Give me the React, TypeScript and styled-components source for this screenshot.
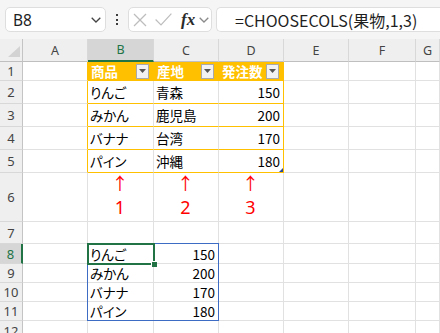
import React from 'react';
import styled, { createGlobalStyle } from 'styled-components';

const ORANGE = '#ffc000';
const GRID = '#e1e1e1';
const GREEN = '#217346';

const GlobalStyle = createGlobalStyle`
  html, body { margin: 0; padding: 0; background: #fff; }
  body { width: 440px; height: 333px; overflow: hidden; font-family: "Noto Sans CJK JP", sans-serif; }
`;

const Window = styled.div`
  width: 440px;
  height: 333px;
  overflow: hidden;
  background: #fff;
  display: flex;
  flex-direction: column;
`;

const FormulaBar = styled.div`
  height: 39px;
  flex-shrink: 0;
  box-sizing: border-box;
  padding: 7px 0 7px 5px;
  background: #f5f5f5;
  display: flex;
  align-items: stretch;
`;

const Box = styled.div`
  box-sizing: border-box;
  background: #fff;
  border: 1px solid #dedede;
  border-radius: 5px;
  display: flex;
  align-items: center;
`;

const NameBox = styled(Box)`
  width: 101px;
  padding: 0 4px 0 7px;
  justify-content: space-between;
  font: 15.5px "Noto Sans", sans-serif;
  color: #1f1f1f;
`;

const Dots = styled.div`
  width: 22px;
  display: flex;
  flex-direction: column;
  align-items: center;
  justify-content: center;
  gap: 2.7px;
`;

const Dot = styled.span`
  width: 2px;
  height: 2px;
  background: #3c3c3c;
`;

const FxGroup = styled(Box)`
  width: 84px;
  padding-left: 4px;
`;

const Fx = styled.span`
  font: italic bold 17px "Liberation Serif", serif;
  color: #2b2b2b;
  margin-left: 9px;
  margin-right: 4px;
  line-height: 1;
`;

const FormulaInput = styled(Box)`
  flex: 1;
  margin-left: 4px;
  border-right: none;
  border-radius: 5px 0 0 5px;
  padding-left: 18px;
  font: 16px "Noto Sans CJK JP", sans-serif;
  font-feature-settings: "palt";
  color: #1f1f1f;
  white-space: nowrap;
`;

const Sheet = styled.div`
  display: grid;
  grid-template-columns: 23px 65px 66px 65px 65px 65px 67px 1fr;
  grid-template-rows: 23px 19px 23px 23px 23px 23px 49px 22px 20px 19px 19px 19px 20px;
`;

const Corner = styled.div`
  grid-row: 1;
  grid-column: 1;
  box-sizing: border-box;
  background: #efefef;
  border-right: 1px solid #c4c4c4;
  border-bottom: 1px solid #bfbfbf;
  display: flex;
  align-items: flex-end;
  justify-content: flex-end;
  padding: 0 2px 4px 0;
`;

const ColHead = styled.div<{ $col: number; $selected?: boolean }>`
  grid-row: 1;
  grid-column: ${p => p.$col};
  box-sizing: border-box;
  background: ${p => (p.$selected ? '#d6d6d6' : '#efefef')};
  border-right: 1px solid #d8d8d8;
  border-bottom: ${p => (p.$selected ? `2px solid ${GREEN}` : '1px solid #bfbfbf')};
  display: flex;
  align-items: center;
  justify-content: center;
  font: 12.5px "Noto Sans", sans-serif;
  color: ${p => (p.$selected ? GREEN : '#444')};
`;

const RowHead = styled.div<{ $row: number; $selected?: boolean }>`
  grid-row: ${p => p.$row};
  grid-column: 1;
  box-sizing: border-box;
  background: ${p => (p.$selected ? '#d6d6d6' : '#efefef')};
  border-right: ${p => (p.$selected ? `2px solid ${GREEN}` : '1px solid #c4c4c4')};
  border-bottom: 1px solid #d8d8d8;
  display: flex;
  align-items: center;
  justify-content: center;
  font: 13px "Noto Sans", sans-serif;
  color: ${p => (p.$selected ? GREEN : '#444')};
`;

const Cell = styled.div<{
  $row: number;
  $col: number;
  $bg?: string;
  $right?: string;
  $bottom?: string;
  $align?: 'flex-start' | 'flex-end' | 'center' | 'space-between';
}>`
  grid-row: ${p => p.$row};
  grid-column: ${p => p.$col};
  position: relative;
  box-sizing: border-box;
  min-width: 0;
  background: ${p => p.$bg ?? '#fff'};
  border-right: 1px solid ${p => p.$right ?? GRID};
  border-bottom: 1px solid ${p => p.$bottom ?? GRID};
  display: flex;
  align-items: center;
  justify-content: ${p => p.$align ?? 'flex-start'};
  padding: 0 3px 0 2px;
  font: 13.5px "Noto Sans CJK JP", sans-serif;
  font-feature-settings: "palt";
  color: #000;
  white-space: nowrap;
`;

const HeadLabel = styled.span`
  font-weight: bold;
  color: #fff;
  padding-left: 1px;
`;

const FilterButton = styled.span`
  box-sizing: border-box;
  width: 13px;
  height: 15px;
  margin-right: 1px;
  border: 1px solid #a9a9a9;
  background: #f2f2f2;
  display: flex;
  align-items: center;
  justify-content: center;
`;

const Note = styled.div`
  display: flex;
  flex-direction: column;
  align-items: center;
  justify-content: flex-end;
  width: 100%;
  height: 100%;
  padding-bottom: 3px;
  box-sizing: border-box;
  color: #ff0000;
`;

const Arrow = styled.span`
  font: 17px "Noto Sans CJK JP", sans-serif;
  line-height: 26px;
`;

const NoteNum = styled.span`
  font: 18px "Noto Sans", sans-serif;
  line-height: 22px;
`;

const ResizeHandle = styled.span`
  position: absolute;
  right: 0;
  bottom: 0;
  width: 0;
  height: 0;
  border-left: 4px solid transparent;
  border-bottom: 4px solid #2b4a9a;
`;

const SpillFrame = styled.div`
  grid-row: 9 / 13;
  grid-column: 3 / 5;
  margin: -1px 0 0 -1px;
  border: 1px solid #3d6cc4;
  pointer-events: none;
  z-index: 1;
`;

const ActiveFrame = styled.div`
  grid-row: 9;
  grid-column: 3;
  margin: -1px;
  border: 2px solid ${GREEN};
  position: relative;
  pointer-events: none;
  z-index: 2;
`;

const FillHandle = styled.span`
  position: absolute;
  right: -4px;
  bottom: -4px;
  width: 5px;
  height: 5px;
  background: ${GREEN};
  border-left: 1px solid #fff;
  border-top: 1px solid #fff;
`;

const COLS = ['A', 'B', 'C', 'D', 'E', 'F', 'G'];
const TABLE_HEAD = ['商品', '産地', '発注数'];
const TABLE_BODY: (string | number)[][] = [
  ['りんご', '青森', 150],
  ['みかん', '鹿児島', 200],
  ['バナナ', '台湾', 170],
  ['パイン', '沖縄', 180],
];
const SPILL: (string | number)[][] = [
  ['りんご', 150],
  ['みかん', 200],
  ['バナナ', 170],
  ['パイン', 180],
];

const Chevron = ({ color }: { color: string }) => (
  <svg width={10} height={6} viewBox="0 0 10 6">
    <polyline points="0.7,0.7 5,5 9.3,0.7" fill="none" stroke={color} strokeWidth={1.3} />
  </svg>
);

function renderCell(r: number, c: number) {
  const gridRow = r + 1;
  const gridCol = c + 2;
  const inTable = r >= 1 && r <= 5 && c >= 1 && c <= 3;
  let right: string | undefined;
  let bottom: string | undefined;
  let bg: string | undefined;
  let align: 'flex-start' | 'flex-end' | 'center' | 'space-between' | undefined;
  let content: React.ReactNode = null;

  if (r >= 1 && r <= 5 && (c === 0 || c === 3)) right = ORANGE;
  if (r === 1 && (c === 1 || c === 2)) right = ORANGE;
  if (inTable) bottom = ORANGE;

  if (r === 1 && inTable) {
    bg = ORANGE;
    align = 'space-between';
    content = (
      <>
        <HeadLabel>{TABLE_HEAD[c - 1]}</HeadLabel>
        <FilterButton>
          <svg width={7} height={4} viewBox="0 0 7 4">
            <polygon points="0,0 7,0 3.5,4" fill="#555" />
          </svg>
        </FilterButton>
      </>
    );
  } else if (inTable) {
    const v = TABLE_BODY[r - 2][c - 1];
    if (typeof v === 'number') align = 'flex-end';
    content = (
      <>
        {v}
        {r === 5 && c === 3 && <ResizeHandle />}
      </>
    );
  } else if (r === 6 && c >= 1 && c <= 3) {
    content = (
      <Note>
        <Arrow>↑</Arrow>
        <NoteNum>{c}</NoteNum>
      </Note>
    );
  } else if (r >= 8 && r <= 11 && (c === 1 || c === 2)) {
    const v = SPILL[r - 8][c - 1];
    if (typeof v === 'number') align = 'flex-end';
    content = v;
  }

  return (
    <Cell
      key={`${r}-${c}`}
      $row={gridRow}
      $col={gridCol}
      $bg={bg}
      $right={right}
      $bottom={bottom}
      $align={align}
    >
      {content}
    </Cell>
  );
}

export default function App() {
  const rows = Array.from({ length: 12 }, (_, i) => i + 1);
  return (
    <>
      <GlobalStyle />
      <Window>
        <FormulaBar>
          <NameBox>
            <span>B8</span>
            <Chevron color="#444" />
          </NameBox>
          <Dots>
            <Dot />
            <Dot />
            <Dot />
          </Dots>
          <FxGroup>
            <svg width={14} height={14} viewBox="0 0 14 14">
              <line x1="1" y1="1" x2="13" y2="13" stroke="#bdbdbd" strokeWidth={1.2} />
              <line x1="13" y1="1" x2="1" y2="13" stroke="#bdbdbd" strokeWidth={1.2} />
            </svg>
            <svg width={17} height={13} viewBox="0 0 17 13" style={{ marginLeft: 8 }}>
              <polyline points="0.6,6.5 6,12 16.4,0.6" fill="none" stroke="#bdbdbd" strokeWidth={1.2} />
            </svg>
            <Fx>fx</Fx>
            <Chevron color="#8a8a8a" />
          </FxGroup>
          <FormulaInput>=CHOOSECOLS(果物,1,3)</FormulaInput>
        </FormulaBar>
        <Sheet>
          <Corner>
            <svg width={12} height={11} viewBox="0 0 12 11">
              <polygon points="12,0 12,11 0,11" fill="#d3d3d3" />
            </svg>
          </Corner>
          {COLS.map((name, i) => (
            <ColHead key={name} $col={i + 2} $selected={name === 'B'}>
              {name}
            </ColHead>
          ))}
          {rows.map(r => (
            <React.Fragment key={r}>
              <RowHead $row={r + 1} $selected={r === 8}>
                {r}
              </RowHead>
              {COLS.map((_, c) => renderCell(r, c))}
            </React.Fragment>
          ))}
          <SpillFrame />
          <ActiveFrame>
            <FillHandle />
          </ActiveFrame>
        </Sheet>
      </Window>
    </>
  );
}
